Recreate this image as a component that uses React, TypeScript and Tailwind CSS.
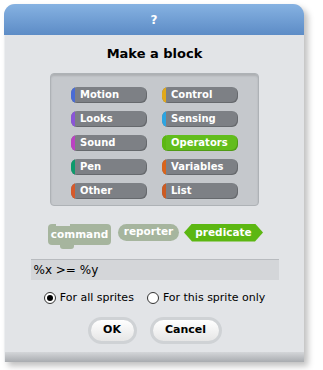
import React from 'react';

const categories = [
  { label: 'Motion', color: '#4a6cd4' },
  { label: 'Control', color: '#e1a91a' },
  { label: 'Looks', color: '#8a55d7' },
  { label: 'Sensing', color: '#2ca5e2' },
  { label: 'Sound', color: '#bb42c3' },
  { label: 'Operators', color: '#5cb712', active: true },
  { label: 'Pen', color: '#0e9a6c' },
  { label: 'Variables', color: '#d9641b' },
  { label: 'Other', color: '#d65a2b' },
  { label: 'List', color: '#cc5b22' },
];

const CategoryButton = ({ label, color, active }: { label: string; color: string; active?: boolean }) => (
  <div
    className={`flex h-[16px] w-[76px] items-stretch overflow-hidden rounded-[6px] shadow-[inset_-1px_-1px_0_rgba(0,0,0,0.18)] ${
      active ? 'bg-[#62bd1c]' : 'bg-[#7d8085]'
    }`}
  >
    <div className="w-[4px] shrink-0" style={{ backgroundColor: color }} />
    <span className="pl-[5px] text-[10px] font-bold leading-[16px] text-white">{label}</span>
  </div>
);

export default function App() {
  return (
    <div className="h-[370px] w-[323px] bg-white pl-[4px] pt-[4px] font-['DejaVu_Sans',sans-serif]">
      <div className="flex h-[358px] w-[300px] flex-col overflow-hidden rounded-t-[11px] bg-[#e2e4e7] shadow-[4px_4px_6px_rgba(0,0,0,0.25)]">
        {/* title bar */}
        <div className="flex h-[31px] shrink-0 items-center justify-center bg-gradient-to-b from-[#86b2e2] to-[#5d8cc6]">
          <span className="text-[12px] font-bold text-white">?</span>
        </div>

        <div className="flex flex-1 flex-col items-center border-l border-l-[#eceef0]">
          <h1 className="mt-[9px] text-[13px] font-bold text-black">Make a block</h1>

          {/* category palette */}
          <div className="mt-[9px] grid h-[133px] w-[209px] grid-cols-[76px_76px] content-start gap-x-[15px] gap-y-[8px] rounded-[4px] border border-[#aeb2b6] bg-[#c5c8cc] pl-[20px] pt-[13px] shadow-[inset_0_2px_2px_rgba(0,0,0,0.12)]">
            {categories.map((c) => (
              <CategoryButton key={c.label} {...c} />
            ))}
          </div>

          {/* block shapes */}
          <div className="mt-[18px] flex w-full items-start pl-[43px]">
            <div className="relative flex h-[21px] w-[63px] items-center justify-center rounded-[4px] bg-[#a6b59e] pt-[2px]">
              <div className="absolute left-[8px] top-[-2px] h-[4px] w-[14px] rounded-t-[2px] bg-[#e2e4e7]" />
              <div className="absolute bottom-[-4px] left-[12px] h-[5px] w-[14px] rounded-b-[3px] bg-[#a6b59e]" />
              <span className="text-[10.5px] font-bold text-white">command</span>
            </div>
            <div className="ml-[7px] flex h-[17px] w-[61px] items-center justify-center rounded-full bg-[#a6b59e]">
              <span className="text-[10.5px] font-bold text-white">reporter</span>
            </div>
            <div className="ml-[5px] flex h-[18px] w-[79px] items-center justify-center bg-[#5cb712] [clip-path:polygon(8px_0,calc(100%-8px)_0,100%_50%,calc(100%-8px)_100%,8px_100%,0_50%)]">
              <span className="text-[10.5px] font-bold text-white">predicate</span>
            </div>
          </div>

          {/* spec input */}
          <div className="mt-[14px] flex h-[21px] w-[248px] items-center border-t border-t-[#b8bbbf] bg-[#d4d6d9] pl-[3px] text-[12px] text-black">
            %x &gt;= %y
          </div>

          {/* radios */}
          <div className="mt-[10px] flex items-center text-[11px] text-black">
            <span className="flex h-[12px] w-[12px] items-center justify-center rounded-full border border-[#333] bg-white">
              <span className="h-[6px] w-[6px] rounded-full bg-black" />
            </span>
            <span className="ml-[4px]">For all sprites</span>
            <span className="ml-[13px] h-[12px] w-[12px] rounded-full border border-[#333] bg-white" />
            <span className="ml-[4px]">For this sprite only</span>
          </div>

          {/* buttons */}
          <div className="mt-[11px] flex gap-[13px]">
            <div className="flex h-[27px] w-[49px] items-center justify-center rounded-full border-[3px] border-[#cfd2d5] bg-gradient-to-b from-white to-[#e6e6e6] text-[11px] font-bold text-black">
              OK
            </div>
            <div className="flex h-[27px] w-[72px] items-center justify-center rounded-full border-[3px] border-[#cfd2d5] bg-gradient-to-b from-white to-[#e6e6e6] text-[11px] font-bold text-black">
              Cancel
            </div>
          </div>

          <div className="mt-auto h-[10px] w-full bg-gradient-to-b from-[#d4d6d9] to-[#a9acb0]" />
        </div>
      </div>
    </div>
  );
}
